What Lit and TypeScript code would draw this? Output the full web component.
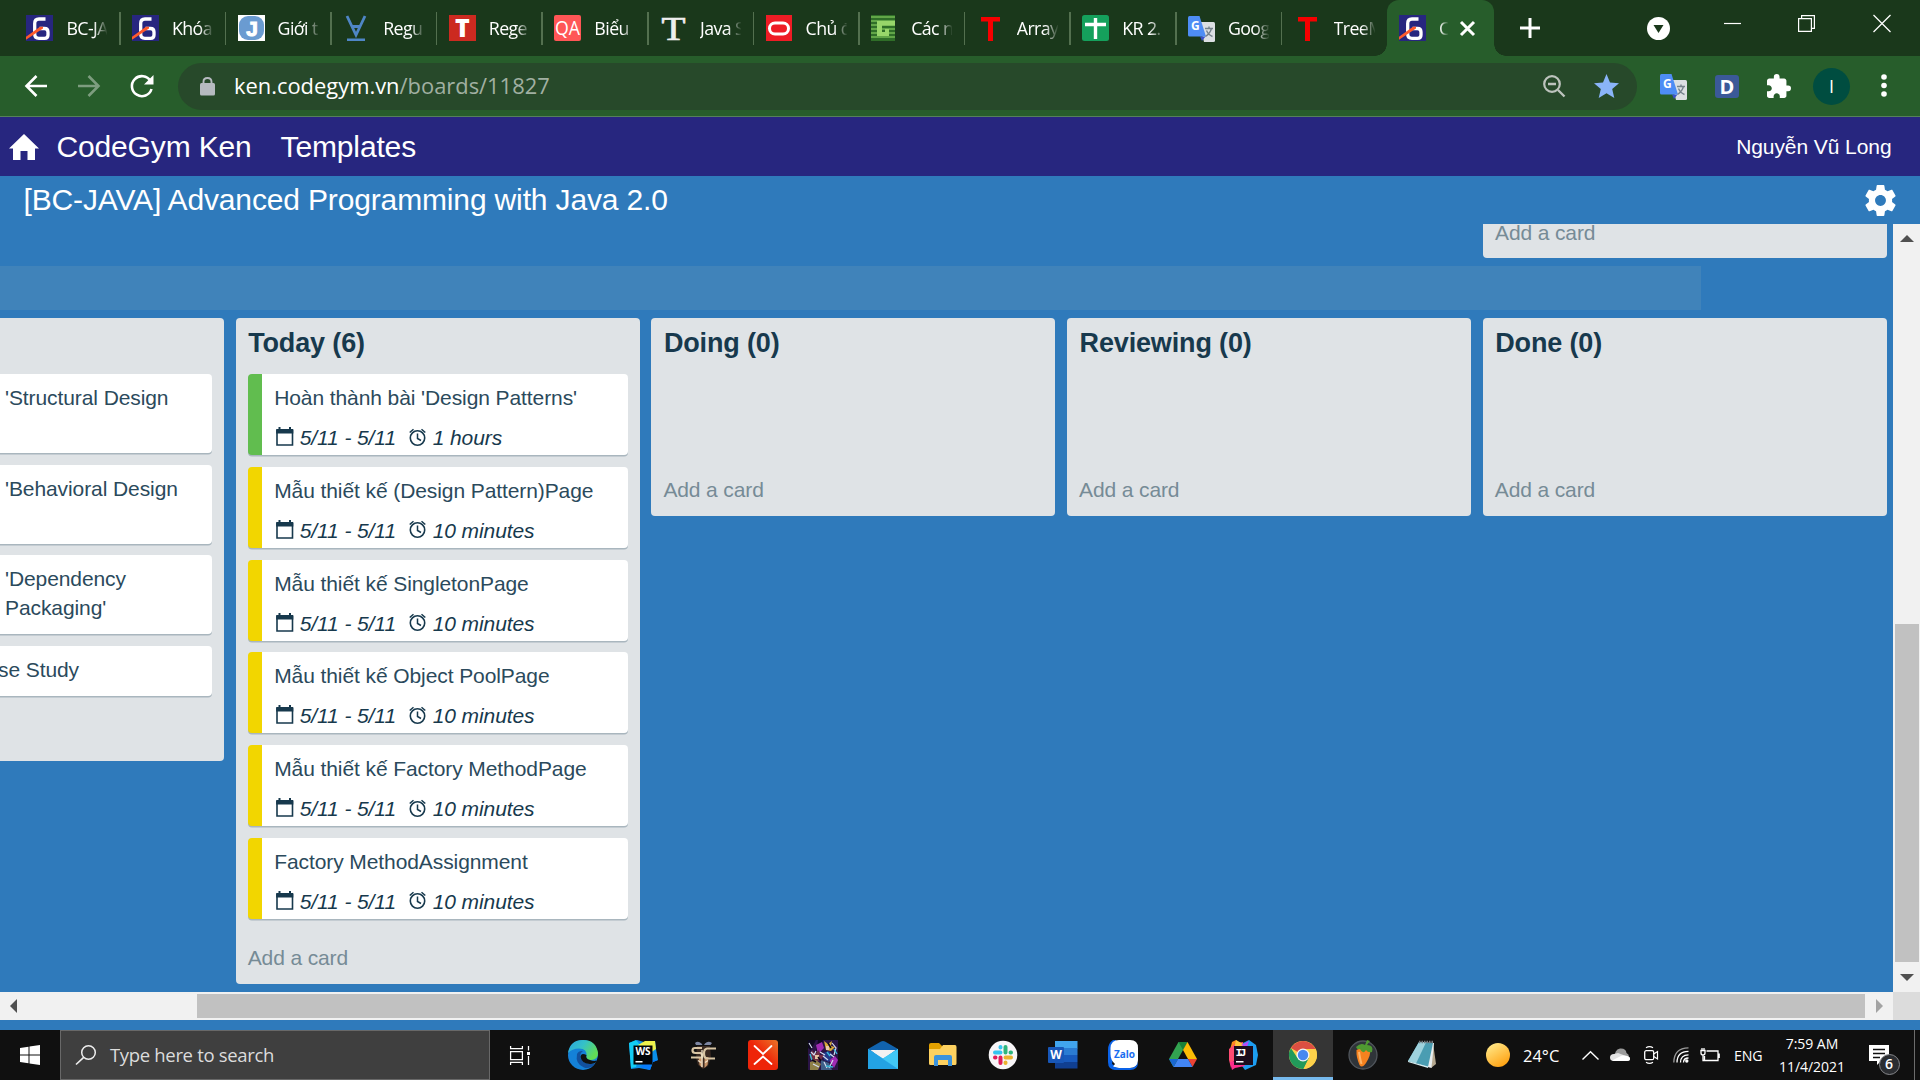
import { LitElement, html, svg, css, nothing } from "lit";
import { customElement, property } from "lit/decorators.js";

type Tab = { icon: string; label: string; active?: boolean };
type Card = { title: string; time?: string; color?: string; kind?: string };
type Column = { title: string; cards: Card[]; cut?: boolean };

const TABS: Tab[] = [
  { icon: "gym", label: "BC-JA" },
  { icon: "gym", label: "Khóa" },
  { icon: "jblue", label: "Giới t" },
  { icon: "viblo", label: "Regu" },
  { icon: "tred", label: "Rege" },
  { icon: "qa", label: "Biểu" },
  { icon: "tserif", label: "Java S" },
  { icon: "oracle", label: "Chủ đ" },
  { icon: "green", label: "Các n" },
  { icon: "tplain", label: "Array" },
  { icon: "sheet", label: "KR 2." },
  { icon: "translate", label: "Goog" },
  { icon: "tplain", label: "TreeM" },
  { icon: "gym", label: "C", active: true },
];

const COLUMNS: Column[] = [
  {
    title: "",
    cut: true,
    cards: [
      { title: "'Structural Design", kind: "tall" },
      { title: "'Behavioral Design", kind: "tall" },
      { title: "'Dependency Packaging'", kind: "tall" },
      { title: "se Study", kind: "short" },
    ],
  },
  {
    title: "Today (6)",
    cards: [
      { title: "Hoàn thành bài 'Design Patterns'", time: "1 hours", color: "green" },
      { title: "Mẫu thiết kế (Design Pattern)Page", time: "10 minutes", color: "yellow" },
      { title: "Mẫu thiết kế SingletonPage", time: "10 minutes", color: "yellow" },
      { title: "Mẫu thiết kế Object PoolPage", time: "10 minutes", color: "yellow" },
      { title: "Mẫu thiết kế Factory MethodPage", time: "10 minutes", color: "yellow" },
      { title: "Factory MethodAssignment", time: "10 minutes", color: "yellow" },
    ],
  },
  { title: "Doing (0)", cards: [] },
  { title: "Reviewing (0)", cards: [] },
  { title: "Done (0)", cards: [] },
];

const TASKS = ["edge", "ws", "sc", "xmind", "game", "mail", "folder", "slack", "word", "zalo", "drive", "ij", "chrome", "fl", "note"];

const translateArt = svg`
  <path d="M11 7H25.5Q27 7 27 8.500V25.500Q27 27 25.500 27H16z" fill="#dcdfe3"/>
  <path d="M12 21.500h5.500L14 26z" fill="#3a50c8"/>
  <path d="M1.500 1H11.500L18 21.500H1.500Q0 21.500 0 20V2.500Q0 1 1.500 1z" fill="#4e8df5"/>
  <path d="M17 13.500h8M21 11.500v2M23.500 13.500q-1.500 5-6 8M18.500 15.500q2 4.500 6 6" stroke="#75828c" stroke-width="1.400" fill="none"/>
  <text x="3" y="15" font-size="12" font-weight="700" fill="#fff" font-family="Open Sans, sans-serif">G</text>`;

const ART: Record<string, unknown> = {
  gym: svg`<rect width="27" height="26" fill="#27267f"/>
    <path d="M19.500 4H13Q8.700 4 8.700 8.500V19Q8.700 23.300 13 23.300H18.500Q22 23.300 22 20V17Q22 13.500 18.500 13.500H13.500" fill="none" stroke="#fff" stroke-width="3.300"/>
    <path d="M0 20.500L6 16L8 26H0z" fill="#27267f"/>
    <path d="M0 24.800V21.800L14 11.800H17V13.500z" fill="#ff5a2b"/>`,
  jblue: svg`<rect width="27" height="26" fill="#fff"/><rect x="1" y="1" width="25" height="24" rx="9" fill="#6a9bd1"/>
    <text x="14" y="20.500" text-anchor="middle" font-size="21" font-weight="700" fill="#fff" stroke="#fff" stroke-width="1" font-family="Liberation Sans, sans-serif">J</text>`,
  viblo: svg`<path d="M4 1L13 20L22 1M8.500 11.500H17.500" fill="none" stroke="#4f86c6" stroke-width="2.800"/><rect x="4" y="23.500" width="18" height="2.500" fill="#4f86c6"/>`,
  tred: svg`<rect width="27" height="26" fill="#cc2a20"/>
    <text x="13.500" y="22" text-anchor="middle" font-size="25" font-weight="800" fill="#fff" font-family="Open Sans, sans-serif">T</text>`,
  qa: svg`<rect width="27" height="26" rx="2" fill="#ff5656"/>
    <text x="13.500" y="20" text-anchor="middle" font-size="20" textLength="25" lengthAdjust="spacingAndGlyphs" fill="#fff" font-family="Open Sans, sans-serif">QA</text>`,
  tserif: svg`<text x="13.500" y="25" text-anchor="middle" font-size="34" textLength="24" lengthAdjust="spacingAndGlyphs" fill="#eee" stroke="#eee" stroke-width=".7" font-family="Liberation Serif, serif">T</text>`,
  oracle: svg`<rect width="26" height="26" fill="#ee1c25"/><rect x="3.500" y="8" width="19" height="11" rx="5.500" fill="none" stroke="#fff" stroke-width="3"/>`,
  green: svg`<rect width="24" height="26" fill="#2f6e28"/>
    ${[1, 5, 9, 13, 17, 21].map((y) => svg`<rect y="${y}" width="24" height="2" fill="#62a648"/>`)}
    <path d="M6 6H24V10.500H11V17H14V14H18V21H6z" fill="#98d66a"/>`,
  tplain: svg`<rect x="4" y="2" width="19" height="4.500" fill="#f60000"/><rect x="11" y="2" width="5" height="24" fill="#f60000"/>`,
  sheet: svg`<rect width="27" height="26" rx="2.500" fill="#15a05c"/><path d="M13.500 3v21M3 9.500h21" stroke="#fff" stroke-width="3.400"/>`,
  translate: translateArt,

  edge: svg`<defs><linearGradient id="e1" x1="0" y1="0" x2="1" y2=".5"><stop offset="0" stop-color="#2aa5e0"/><stop offset=".5" stop-color="#35c1c8"/><stop offset="1" stop-color="#62dd55"/></linearGradient></defs>
    <circle cx="15" cy="15" r="15" fill="#1481d8"/>
    <path d="M0 13Q2 0 15 0Q28 0 30 13Q30 20 23 20Q17.500 20 18.500 16.500Q19.500 8.500 11 8.500Q4 8.500 0 13z" fill="url(#e1)"/>
    <path d="M9 14Q7 24 16 27.500Q22 29.500 27.500 23.500Q16 26 12.500 18Q11.500 13 15 11Q10.500 10.500 9 14z" fill="#12509e"/>
    <path d="M28.600 21Q30 18 30 16V30H20Q25.500 28 28.600 21z" fill="#101010"/>
    <path d="M18.500 15Q13 12 12.500 17Q14 24.500 23 24Q29 23 28.500 20.500Q26 21.500 22 20Q17 18.500 18.500 15z" fill="#101010"/>`,
  ws: svg`<path d="M1 3L9 0L16 2L27 1L28 9L30 20L25 22L22 30L11 28L3 29z" fill="#0b8fe8"/>
    <path d="M1 3L8 0L13 6L8 27L3 28z" fill="#12cdf3"/><path d="M10 5L17 1L27 1L28 9L22 13z" fill="#eef24b"/><path d="M20 20L30 20L25 22L22 30L12 27z" fill="#087cfa"/>
    <rect x="5.500" y="5.500" width="19" height="19" fill="#020608"/><rect x="7.500" y="21" width="7" height="1.500" fill="#fff"/>
    <text x="15" y="15" text-anchor="middle" font-size="10" font-weight="700" fill="#fff" font-family="Open Sans, sans-serif">WS</text>`,
  sc: svg`<path d="M7 3Q10 .5 13.500 3.500L14.500 5H8zM17 3.500Q20 .5 24 3L22.500 5H16z" fill="#7d86a2"/>
    <path d="M9 6H22L23 18L20 26L15 29L10 25L8 18z" fill="#3a2a22"/>
    <path d="M10.500 17H14.500V28L11.500 25z" fill="#c89468"/><path d="M16.500 17H20.500L19.500 25L16.500 28z" fill="#c89468"/>
    <path d="M14 8H7Q4.500 8 4.500 10.500Q4.500 13 7.500 13H12.500Q15 14 14 17.500H3" fill="none" stroke="#d8c5a4" stroke-width="2.200"/>
    <path d="M28 8.500H19Q16 9 16 13.500Q16 18 19 18.500H27" fill="none" stroke="#d8c5a4" stroke-width="2.200"/>
    <path d="M14 10v17M10 20.500l3 2M20 20.500l-3 2" stroke="#efe2ca" stroke-width="1.300"/>`,
  xmind: svg`<defs><linearGradient id="x1" x1="0" y1="1" x2="1" y2="0"><stop offset=".5" stop-color="#ee2509"/><stop offset="1" stop-color="#ec7528"/></linearGradient></defs>
    <rect width="30" height="30" rx="3" fill="url(#x1)"/><path d="M6.500 6L15 14L23.500 6M6.500 24L15 16.500L23.500 24" fill="none" stroke="#fff" stroke-width="1.800" stroke-linecap="round"/>`,
  game: svg`<rect width="30" height="30" fill="#2a1446"/>
    <path d="M0 0h8L3 10L0 8zM10 0h5l-2 10-5 3z" fill="#0e0820"/><path d="M8 5l6-3 2 6-6 6zM21 20l6-4 3 4-4 8z" fill="#a02bb4"/>
    <path d="M16 1l4 3 4-3-1 5 4 1-4 4-5-1z" fill="#d8a93a"/><path d="M18 6h3v4h-3z" fill="#eac9ab"/>
    <path d="M4 10l3 4 4-4 1 5 4 0-3 5-7 2-4-4z" fill="#6e2d45"/><path d="M7 15h4v4H7z" fill="#e7c4a4"/>
    <path d="M15 13l6-2 4 4-4 7-5-2z" fill="#233a8a"/><path d="M2 22l6-2 5 4-3 6H2z" fill="#8f8048"/><path d="M13 20l8 3 3 7H13z" fill="#3f5f88"/>
    <path d="M24 3l4 5-2 7M1 3l3 5M15 16l5 4M5 24l6 3M25 20l-4 8M12 12l5 3M3 12l3 3 2-4M16 22l3 6M22 14l4 3" stroke="#d5dcef" stroke-width="1.200" fill="none"/>
    <path d="M26 9l3 5M18 26l7 1M2 14l2 6M19 12l3 4" stroke="#38b8d8" stroke-width="1.400"/><path d="M10 17l3 4M4 20l4 2M20 3l3 5" stroke="#0d0818" stroke-width="1.500"/>`,
  mail: svg`<path d="M0 9L13 1.500Q15 .3 17 1.500L30 9V14H0z" fill="#1163ae"/><path d="M2.500 10H27.500L15 20z" fill="#f2f2f2"/>
    <path d="M0 9L15 18.500L30 9V29H0z" fill="#30b5ee"/><path d="M0 29L15 18.500L30 9V29z" fill="#41c8f6"/><path d="M0 9L30 29H0z" fill="#23a2e4"/>`,
  folder: svg`<path d="M1 5Q1 3 3 3H11L14 6V10H1z" fill="#e3a100"/><path d="M1 9H12L15 5H27Q28.500 5 28.500 7V23.500Q28.500 25 27 25H2.500Q1 25 1 23.500z" fill="#fdd160"/>
    <path d="M6 17Q6 15 8 15H22Q24 15 24 17V26H20V20H10V26H6z" fill="#3c93dc"/>`,
  slack: svg`<circle cx="15" cy="15" r="14.300" fill="#f8f6f8"/>
    <g stroke-width="4" stroke-linecap="round"><path d="M12.500 7V7.500M7 12.500H12.500" stroke="#36c5f0"/><path d="M17.500 7V12.500M22.500 12.500H23" stroke="#2eb67d"/>
    <path d="M17.500 17.500H23M17.500 22.500V23" stroke="#ecb22e"/><path d="M12.500 17.500V23M7 17.500H7.500" stroke="#e01e5a"/></g>`,
  word: svg`<rect x="7" y="1" width="22.500" height="7.500" fill="#41a5ee"/><rect x="7" y="8" width="22.500" height="7" fill="#2b7cd3"/><rect x="7" y="15" width="22.500" height="7" fill="#185abd"/><rect x="7" y="22" width="22.500" height="6.500" fill="#103f91"/>
    <rect x="0" y="7" width="16" height="16" rx="1" fill="#1857b8"/><text x="8" y="19" text-anchor="middle" font-size="12" font-weight="700" fill="#fff" font-family="Open Sans, sans-serif">W</text>`,
  zalo: svg`<path d="M8 0H5Q0 3 0 10V22Q0 30 8 30H14L4 24z" fill="#0a62e8"/><path d="M11 0H22Q30 0 30 8V20Q30 28 22 28H11L5 26.500L7 24Q2.500 20 2.500 14V8Q3 0 11 0z" fill="#fff"/><path d="M8 30Q4 29 3 26L9 28H22Q28 28 30 22Q30 30 22 30z" fill="#0a62e8"/>
    <text x="16.500" y="17.500" text-anchor="middle" font-size="10" textLength="21" font-weight="700" fill="#1a6df0" font-family="Open Sans, sans-serif">Zalo</text>`,
  drive: svg`<path d="M10.500 2H19.500L10 19L5.500 27L1 19z" fill="#32a350"/><path d="M10.500 2H19.500L15 10z" fill="#188038"/><path d="M19.500 2L29 19H20L15 10z" fill="#fbbc05"/><path d="M29 19L24.500 27L20 19z" fill="#ea4335"/><path d="M10 19H20L24.500 27H5.500z" fill="#4285f4"/><path d="M1 19H10L5.500 27z" fill="#1967d2"/>`,
  ij: svg`<path d="M4 2L8 0L13 5L6 13L1 14z" fill="#fc8a1d"/><path d="M1 9L8 3L15 2L17 8L5 22L3 28L1 20z" fill="#ff4b72"/><path d="M8 0L15 4L14 10L6 9z" fill="#ffc63c"/><path d="M15 3L21 0L28 5L30 15L28 25L17 30L14 26z" fill="#1d9df1"/><path d="M2 22L12 20L17 26L7 28L4 30z" fill="#fd2c8c"/><path d="M13 5L21 1L19 7z" fill="#b74af7"/>
    <rect x="6" y="6" width="19" height="19" fill="#1b0d1c"/><rect x="8" y="21" width="7.500" height="1.500" fill="#fff"/>
    <text x="7.500" y="15.500" font-size="11.500" textLength="11" font-weight="700" fill="#fff" font-family="Liberation Mono, monospace">IJ</text>`,
  chrome: svg`<circle cx="15" cy="15" r="14" fill="#fdd14a"/><path d="M15 15L2.900 8A14 14 0 0 1 27.100 8L27.600 9H15z" fill="#dc4f42"/><path d="M2.900 8A14 14 0 0 0 15.500 29L21 18L9.500 18z" fill="#229a5a"/><path d="M27.600 9A14 14 0 0 1 15.500 29L21 18Q22.500 13 18 9z" fill="#fdd14a"/>
    <circle cx="15" cy="15" r="6.500" fill="#f4f4f4"/><circle cx="15" cy="15" r="5.200" fill="#4688f1"/>`,
  fl: svg`<circle cx="15" cy="15" r="14" fill="#2f3439" stroke="#51565c" stroke-width="1.300"/><path d="M8.500 10Q14 6 22 11Q23 15 18 23Q14 29 11.500 25Q8 17 8.500 10z" fill="#f5821f"/><path d="M11 12Q12 19 13.500 24" stroke="#ffb466" stroke-width="2" fill="none"/>
    <path d="M8 7Q13 2 17 5L19 0L22 1L19 5Q26 5 24 12Q20 13 18 10Q15 15 12 9Q9 10 8 7z" fill="#4f9a31"/>`,
  note: svg`<path d="M25 3L28 24L23 28z" fill="#b4a78f"/><path d="M11 2L26 3L23.500 28L12 25z" fill="#e8edef"/><path d="M11 2L25 3L20 27L0 21z" fill="#4a9db2"/><path d="M11 2L18 2.500L8 23.500L0 21z" fill="#9ed2dd"/><path d="M0 21L20 26.500L20 28L0 22z" fill="#d8eef2"/><path d="M11 2H26" stroke="#777d82" stroke-width="2.500" stroke-dasharray="1.500 1"/>`,
};

@customElement("art-icon")
class ArtIcon extends LitElement {
  @property() name = "";
  @property({ type: Number }) size = 27;
  static styles = css`
    :host { display: block; flex: none; line-height: 0; }
    svg { display: block; overflow: visible; }
  `;
  render() {
    return html`<svg width=${this.size} height=${this.size} viewBox="0 0 ${this.size} ${this.size}">${ART[this.name]}</svg>`;
  }
}

@customElement("browser-chrome")
class BrowserChrome extends LitElement {
  static styles = css`
    :host { display: block; color: #fff; font-family: "Open Sans", "Noto Sans", sans-serif; }
    svg { display: block; flex: none; overflow: visible; }
    .strip { height: 56px; background: #1a381b; display: flex; padding-left: 14px; box-sizing: border-box; }
    .tabs { display: flex; flex: none; }
    .tab { width: 105.600px; height: 56px; box-sizing: border-box; padding: 15px 0 0 12.400px; display: flex; align-items: flex-start; gap: 13px; position: relative; }
    .tab::after { content: ""; position: absolute; right: -1px; top: 12px; width: 1.600px; height: 33px; background: #53704f; }
    .tab.quiet::after, .tab.active::after { display: none; }
    .label { width: 41px; height: 30px; font-size: 17.800px; line-height: 26px; letter-spacing: -.6px; overflow: hidden; white-space: nowrap; -webkit-mask-image: linear-gradient(90deg, #000 68%, transparent 102%); }
    .active { width: 107px; background: #275d2b; border-radius: 12px 12px 0 0; }
    .active .label { width: 10px; margin-right: -2px; -webkit-mask-image: linear-gradient(90deg, #000 10%, transparent 95%); }
    .foot { position: absolute; bottom: 0; width: 12px; height: 12px; }
    .foot.l { left: -12px; background: radial-gradient(circle at 0 0, transparent 11.500px, #275d2b 12px); }
    .foot.r { right: -12px; background: radial-gradient(circle at 100% 0, transparent 11.500px, #275d2b 12px); }
    .cross { margin-top: 6px; }
    .plus { margin: 18px 0 0 26px; }
    .spacer { flex: 1; }
    .win { display: flex; align-items: flex-start; padding: 15px 29px 0 0; }
    .caret { margin: 1.500px 54px 0 0; }
    .min { margin-right: 57px; }
    .restore { margin-right: 58px; }
    .bar { height: 61px; background: #275d2b; border-bottom: 1px solid #55805a; box-sizing: border-box; display: flex; align-items: center; padding-left: 24px; }
    .forward, .reload { margin-left: 29px; }
    .omni { width: 1459px; height: 47px; margin-left: 24px; border-radius: 24px; background: #27492a; display: flex; align-items: center; padding: 0 18px 0 22px; box-sizing: border-box; }
    .url { font-size: 21.900px; line-height: 30px; margin-left: 19px; white-space: pre; padding-bottom: 1px; }
    .path { color: #a1b0a2; }
    .star { margin-left: 29px; }
    .ext { margin-left: 23px; }
    .puzzle { margin-left: 28px; }
    .dots { margin-left: 31px; }
    .badge { width: 24px; height: 23px; margin-left: 28px; border-radius: 3px; background: #3b5998; font: 700 20px/23px "Open Sans", sans-serif; text-align: center; }
    .avatar { width: 37px; height: 37px; margin-left: 22px; border-radius: 50%; background: #004d40; font-size: 18px; line-height: 36px; text-align: center; }
  `;
  render() {
    return html`
      <div class="strip">
        <div class="tabs">
          ${TABS.map(
            (t, i) => html`<div class="tab ${t.active ? "active" : ""} ${i === TABS.length - 2 ? "quiet" : ""}">
              <art-icon .name=${t.icon}></art-icon><span class="label">${t.label}</span>
              ${t.active
                ? html`<svg class="cross" width="15" height="15"><path d="M1 1L14 14M14 1L1 14" stroke="#fff" stroke-width="3" /></svg>
                    <i class="foot l"></i><i class="foot r"></i>`
                : nothing}
            </div>`
          )}
        </div>
        <svg class="plus" width="20" height="20"><path d="M10 0V20M0 10H20" stroke="#fff" stroke-width="3" /></svg>
        <div class="spacer"></div>
        <div class="win">
          <svg class="caret" width="23" height="23"><circle cx="11.500" cy="11.500" r="11.500" fill="#fff" /><path d="M6.500 8H16.500L11.500 16z" fill="#1a381b" /></svg>
          <svg class="min" width="17" height="17"><path d="M0 8.500H17" stroke="#fff" stroke-width="1.200" /></svg>
          <svg class="restore" width="17" height="17"><path d="M.6 3.600H13.400V16.400H.6zM3.600 3.600V.6H16.400V13.400H13.400" fill="none" stroke="#fff" stroke-width="1.200" /></svg>
          <svg width="18" height="17"><path d="M.5 0L17.500 17M17.500 0L.5 17" stroke="#fff" stroke-width="1.300" /></svg>
        </div>
      </div>
      <div class="bar">
        <svg width="24" height="24"><path d="M23 12H3M12.500 2L2.500 12L12.500 22" fill="none" stroke="#fff" stroke-width="2.600" /></svg>
        <svg class="forward" width="24" height="24"><path d="M1 12H21M11.500 2L21.500 12L11.500 22" fill="none" stroke="#7d9d7f" stroke-width="2.600" /></svg>
        <svg class="reload" width="24" height="24"><path d="M20.500 7A10 10 0 1 0 21.500 15" fill="none" stroke="#fff" stroke-width="2.600" /><path d="M23.500 1V10.500H14z" fill="#fff" /></svg>
        <div class="omni">
          <svg width="15" height="19"><rect y="6" width="15" height="12.500" rx="1.500" fill="#b6bac0" /><path d="M3.500 7V4.700Q3.500 1 7.500 1Q11.500 1 11.500 4.700V7" fill="none" stroke="#b6bac0" stroke-width="1.900" /></svg>
          <span class="url">ken.codegym.vn<span class="path">/boards/11827</span></span>
          <div class="spacer"></div>
          <svg width="22" height="23"><circle cx="9" cy="9" r="7.800" fill="none" stroke="#bdc3bd" stroke-width="2.200" /><path d="M5 9H13M15 15L21.500 21.500" stroke="#bdc3bd" stroke-width="2.400" /></svg>
          <svg class="star" width="25" height="24" viewBox="0 0 25 24"><path d="M12.500 0L16 8.500L25 9.200L18.200 15L20.300 24L12.500 19.200L4.700 24L6.800 15L0 9.200L9 8.500z" fill="#8ab4f8" /></svg>
        </div>
        <art-icon class="ext" name="translate"></art-icon>
        <div class="badge">D</div>
        <svg class="puzzle" width="24" height="24" viewBox="2 1 21 21"><path d="M20.500 11H19V7c0-1.100-.9-2-2-2h-4V3.500a2.500 2.500 0 0 0-5 0V5H4c-1.100 0-1.990.9-1.990 2v3.800H3.500c1.490 0 2.700 1.210 2.700 2.700s-1.210 2.700-2.700 2.700H2V20c0 1.100.9 2 2 2h3.800v-1.500c0-1.490 1.210-2.700 2.700-2.700s2.700 1.210 2.700 2.700V22H17c1.100 0 2-.9 2-2v-4h1.500a2.500 2.500 0 0 0 0-5z" fill="#fff" /></svg>
        <div class="avatar">I</div>
        <svg class="dots" width="6" height="24"><circle cx="3" cy="3" r="2.800" fill="#fff" /><circle cx="3" cy="11.500" r="2.800" fill="#fff" /><circle cx="3" cy="20" r="2.800" fill="#fff" /></svg>
      </div>`;
  }
}

@customElement("board-column")
class BoardColumn extends LitElement {
  @property({ attribute: false }) column!: Column;
  static styles = css`
    :host { display: block; flex: none; }
    .col { width: 404px; box-sizing: border-box; background: #dfe3e6; border-radius: 4px; padding: 0 12px 11.800px; color: #17394d; }
    .cut { width: 224px; padding-left: 0; border-radius: 0 4px 4px 0; }
    .cut .cards { gap: 11.600px; }
    h2 { margin: 0; height: 56px; box-sizing: border-box; padding: 6.700px 0 0 .5px; font-size: 27px; line-height: 36px; letter-spacing: -.15px; font-weight: 700; white-space: nowrap; }
    .cards { min-height: 77px; display: flex; flex-direction: column; gap: 11.750px; }
    .card { height: 81px; box-sizing: border-box; background: #fff; border-radius: 4px; box-shadow: 0 1.500px 0 #a9b6be; padding: 9px 0 0 12.500px; border-left: 14px solid #fff; font-size: 21px; line-height: 29px; letter-spacing: -.09px; color: #2b4a5c; }
    .card.green { border-left-color: #61bd4f; }
    .card.yellow { border-left-color: #f2d600; }
    .card.tall { height: 79px; border: 0; border-radius: 0 4px 4px 0; padding-left: 5px; padding-right: 30px; }
    .card.short { height: 50px; border: 0; border-radius: 0 4px 4px 0; padding-left: 0; text-indent: -2px; }
    .meta { margin-top: 11.200px; display: flex; font-style: italic; color: #17394d; white-space: nowrap; }
    .cal { margin: 4px 7px 0 1.500px; }
    .alarm { margin: 4.500px 6.500px 0 14px; }
    .date { width: 95.500px; }
    svg { display: block; flex: none; overflow: visible; }
    .add { height: 29px; margin-top: 24.200px; font-size: 21px; line-height: 29px; letter-spacing: -.12px; color: #768b96; }
  `;
  render() {
    const c = this.column;
    return html`<div class="col ${c.cut ? "cut" : ""}">
      <h2>${c.title}</h2>
      <div class="cards">
        ${c.cards.map(
          (k) => html`<div class="card ${k.color ?? ""} ${k.kind ?? ""}">
            <div>${k.title}</div>
            ${k.time
              ? html`<div class="meta">
                  <svg class="cal" width="17" height="19"><path d="M1 3V18H16.500V3" fill="none" stroke="#17394d" stroke-width="1.600" /><path d="M.2 2H17.300V6.500H.2zM2.500 0H4.500V3H2.500zM13 0H15V3H13z" fill="#17394d" /></svg>
                  <span class="date">5/11 - 5/11</span>
                  <svg class="alarm" width="17" height="18"><circle cx="8.500" cy="10" r="7.200" fill="none" stroke="#17394d" stroke-width="1.600" /><path d="M8.500 5.500V10.500L12 12.500M.7 4.500L4.500 1.200M12.500 1.200L16.300 4.500" fill="none" stroke="#17394d" stroke-width="1.500" /></svg>
                  <span>${k.time}</span>
                </div>`
              : nothing}
          </div>`
        )}
      </div>
      <div class="add">${c.cut ? nothing : "Add a card"}</div>
    </div>`;
  }
}

@customElement("task-bar")
class TaskBar extends LitElement {
  static styles = css`
    :host { display: flex; height: 50px; background: #101010; color: #fff; font-family: "Open Sans", "Noto Sans", sans-serif; overflow: hidden; }
    svg { display: block; flex: none; overflow: visible; }
    .start { width: 60px; display: flex; align-items: center; justify-content: center; flex: none; }
    .search { width: 430px; box-sizing: border-box; border: 1px solid #686868; background: #3f3f3f; display: flex; align-items: center; padding-left: 14px; gap: 14px; flex: none; color: #dcdcdc; font-size: 18.500px; letter-spacing: -.33px; }
    .search span { padding-bottom: 2px; }
    .view { width: 63px; padding-left: 20px; box-sizing: border-box; display: flex; align-items: center; flex: none; }
    .task { width: 60px; display: flex; align-items: center; justify-content: center; flex: none; box-sizing: border-box; }
    .task.on { background: #353535; border-bottom: 3px solid #76b9ed; padding-top: 3px; }
    .tray { display: flex; align-items: center; margin-left: 33px; flex: 1; }
    .temp { font-size: 16.500px; width: 59px; margin-left: 13px; white-space: nowrap; }
    .cloud { margin-left: 11px; }
    .cam, .wifi { margin-left: 14px; }
    .power { margin-left: 11px; }
    .eng { font-size: 14.200px; width: 45px; margin-left: 14px; letter-spacing: -.1px; }
    .clock { width: 66px; font-size: 14px; line-height: 23.300px; text-align: center; white-space: nowrap; letter-spacing: -.05px; }
    .bell { position: relative; margin-left: 24px; width: 45px; height: 20px; }
    .count { position: absolute; left: 9.500px; top: 9px; width: 21px; height: 21px; box-sizing: border-box; border: 1.300px solid #85868a; border-radius: 50%; background: #2b2d31; font-size: 14px; line-height: 18px; text-align: center; font-weight: 600; }
    .edge { width: 1px; height: 50px; background: #6c6c6c; }
  `;
  render() {
    return html`
      <div class="start"><svg width="20" height="20"><path d="M0 3L8.500 1.800V9.400H0zM9.500 1.600L20 0V9.400H9.500zM0 10.400H8.500V18.200L0 17zM9.500 10.400H20V20L9.500 18.400z" fill="#fff" /></svg></div>
      <div class="search">
        <svg width="21" height="20"><circle cx="13.500" cy="7.500" r="6.800" fill="none" stroke="#eee" stroke-width="1.500" /><path d="M8.700 12.300L1 19.500" stroke="#eee" stroke-width="1.600" /></svg>
        <span>Type here to search</span>
      </div>
      <div class="view">
        <svg width="20" height="19"><path d="M.6 0V2.600H12.400V0M.6 5.500H12.400V13.500H.6zM.6 19V16.400H12.400V19M18.500 0V4.500M18.500 10V19" fill="none" stroke="#fff" stroke-width="1.250" /><rect x="17" y="6" width="3" height="3" fill="#fff" /></svg>
      </div>
      ${TASKS.map((t) => html`<div class="task ${t === "chrome" ? "on" : ""}"><art-icon .name=${t} .size=${30}></art-icon></div>`)}
      <div class="tray">
        <svg width="24" height="24"><defs><linearGradient id="sun" x1=".2" y1="0" x2=".8" y2="1"><stop offset="0" stop-color="#ffe98a" /><stop offset="1" stop-color="#ff9d0a" /></linearGradient></defs><circle cx="12" cy="12" r="12" fill="url(#sun)" /></svg>
        <span class="temp">24°C</span>
        <svg width="17" height="9"><path d="M.5 8.500L8.500 .8L16.500 8.500" fill="none" stroke="#fff" stroke-width="1.400" /></svg>
        <svg class="cloud" width="20" height="14"><path d="M5 9Q4 2 10 .5Q16 0 16.500 5Q19 6 19 9z" fill="#9b9b9b" /><path d="M3 13Q0 12.500 0 9.500Q0 6 4 6L8 5L20 9.500Q20.500 13 17 13z" fill="#e2e2e2" /><path d="M2 12.500L12 7.500Q19 7 20 10.500Q20 13 17 13H4z" fill="#fff" /></svg>
        <svg class="cam" width="15" height="18"><rect x=".7" y="4.700" width="9" height="9" rx="1.500" fill="none" stroke="#fff" stroke-width="1.300" /><path d="M9.700 8L13.500 5.500V13L9.700 10.500M2 1.800Q5.500-.5 9 1.800M2 16.300Q5.500 18.500 9 16.300" fill="none" stroke="#fff" stroke-width="1.200" /></svg>
        <svg class="wifi" width="16" height="16"><g fill="none" stroke-width="1.300"><path d="M.8 15.500Q1 1 15.500 .8" stroke="#9a9a9a" /><path d="M4 15.500Q4 4.500 15.500 4.300M7.500 15.500Q7.500 8 15.500 7.800" stroke="#fff" /><path d="M10.500 15.500Q10.500 11 15.500 11" stroke="#fff" /></g><circle cx="13.800" cy="14" r="1.700" fill="#fff" /></svg>
        <svg class="power" width="20" height="14"><path d="M6.500 3H18V12.500H4.500V8M19.200 5.500V10M1 2.500V5Q1 7 3 7Q5 7 5 5V2.500M2 0V2.500M4 0V2.500M.3 2.500H5.700M3 7V12.500H5" fill="none" stroke="#fff" stroke-width="1.300" /></svg>
        <span class="eng">ENG</span>
        <div class="clock">7:59 AM<br />11/4/2021</div>
        <div class="bell">
          <svg width="20" height="20"><path d="M0 0H20V16H12L8 20V16H0z" fill="#fff" /><path d="M4 4.500H16M4 8.500H16M4 12.500H11" stroke="#101010" stroke-width="1.300" /></svg>
          <div class="count">6</div>
        </div>
        <div class="edge"></div>
      </div>`;
  }
}

@customElement("app-root")
class AppRoot extends LitElement {
  static styles = css`
    :host { display: block; width: 1920px; height: 1080px; overflow: hidden; background: #2f7abb; font-family: "Liberation Sans", Arial, sans-serif; color: #fff; }
    svg { display: block; flex: none; overflow: visible; }
    .nav { height: 59px; background: #27267f; display: flex; align-items: center; padding: 0 28.500px 0 9px; font-size: 30px; letter-spacing: -.15px; white-space: nowrap; box-sizing: border-box; }
    .brand { margin: 0 29px 0 17.500px; }
    .user { margin-left: auto; font-size: 21px; letter-spacing: -.08px; padding-top: 1px; }
    .title { height: 48px; box-sizing: border-box; display: flex; align-items: flex-start; justify-content: space-between; padding: 7px 24.500px 0 23.500px; font-size: 30px; line-height: 34px; letter-spacing: -.15px; }
    .gear { margin-top: 2px; }
    .view { display: grid; grid-template-columns: 1893px 27px; grid-template-rows: 768px 28px; }
    .canvas { overflow: hidden; }
    .upper { height: 34px; width: 404px; box-sizing: border-box; margin-left: 1483px; background: #dfe3e6; border-radius: 0 0 4px 4px; color: #768b96; font-size: 21px; line-height: 18px; letter-spacing: -.12px; padding-left: 12px; }
    .lane { width: 1701px; height: 44px; margin: 8px 0; background: #4083ba; }
    .columns { display: flex; gap: 11.700px; align-items: flex-start; }
    .vbar { background: #f1f1f1; display: flex; flex-direction: column; align-items: center; padding: 11px 0; box-sizing: border-box; }
    .vthumb { width: 24px; height: 338px; background: #c1c1c1; margin: auto 0 12px 1px; }
    .hbar { background: #f1f1f1; display: flex; align-items: center; padding: 0 10px; box-sizing: border-box; }
    .hthumb { width: 1668px; height: 24px; background: #c1c1c1; margin: 0 11px 0 auto; }
    .corner { background: #dcdcdc; }
    task-bar { margin-top: 10px; }
  `;
  render() {
    return html`
      <browser-chrome></browser-chrome>
      <div class="nav">
        <svg width="30" height="26"><path d="M15 0L30 14.500H26V26H18.500V17H11.500V26H4V14.500H0z" fill="#fff" /></svg>
        <span class="brand">CodeGym Ken</span><span>Templates</span>
        <span class="user">Nguyễn Vũ Long</span>
      </div>
      <div class="title">
        <span>[BC-JAVA] Advanced Programming with Java 2.0</span>
        <svg class="gear" width="31" height="31" viewBox="2 2 20 20"><path fill="#fff" d="M19.430 12.980c.04-.32.07-.64.07-.98s-.03-.66-.07-.98l2.110-1.650c.19-.15.24-.42.12-.64l-2-3.460c-.12-.22-.39-.3-.61-.22l-2.490 1c-.52-.4-1.080-.73-1.690-.98l-.38-2.650C14.460 2.180 14.250 2 14 2h-4c-.25 0-.46.18-.49.42l-.38 2.650c-.61.25-1.170.59-1.690.98l-2.490-1c-.23-.09-.49 0-.61.22l-2 3.460c-.13.22-.07.49.12.64l2.110 1.650c-.04.32-.07.65-.07.98s.03.66.07.98l-2.110 1.650c-.19.15-.24.42-.12.64l2 3.460c.12.22.39.3.61.22l2.490-1c.52.4 1.080.73 1.690.98l.38 2.650c.03.24.24.42.49.42h4c.25 0 .46-.18.49-.42l.38-2.650c.61-.25 1.170-.59 1.690-.98l2.490 1c.23.09.49 0 .61-.22l2-3.460c.12-.22.07-.49-.12-.64l-2.110-1.650zM12 15.500c-1.930 0-3.500-1.570-3.500-3.500s1.570-3.500 3.500-3.500 3.500 1.570 3.500 3.500-1.570 3.500-3.500 3.500z" /></svg>
      </div>
      <div class="view">
        <div class="canvas">
          <div class="upper">Add a card</div>
          <div class="lane"></div>
          <div class="columns">${COLUMNS.map((c) => html`<board-column .column=${c}></board-column>`)}</div>
        </div>
        <div class="vbar">
          <svg width="14" height="7"><path d="M0 7L7 0L14 7z" fill="#505050" /></svg>
          <div class="vthumb"></div>
          <svg width="14" height="7"><path d="M0 0L7 7L14 0z" fill="#505050" /></svg>
        </div>
        <div class="hbar">
          <svg width="7" height="14"><path d="M7 0L0 7L7 14z" fill="#505050" /></svg>
          <div class="hthumb"></div>
          <svg width="7" height="14"><path d="M0 0L7 7L0 14z" fill="#a3a3a3" /></svg>
        </div>
        <div class="corner"></div>
      </div>
      <task-bar></task-bar>`;
  }
}
